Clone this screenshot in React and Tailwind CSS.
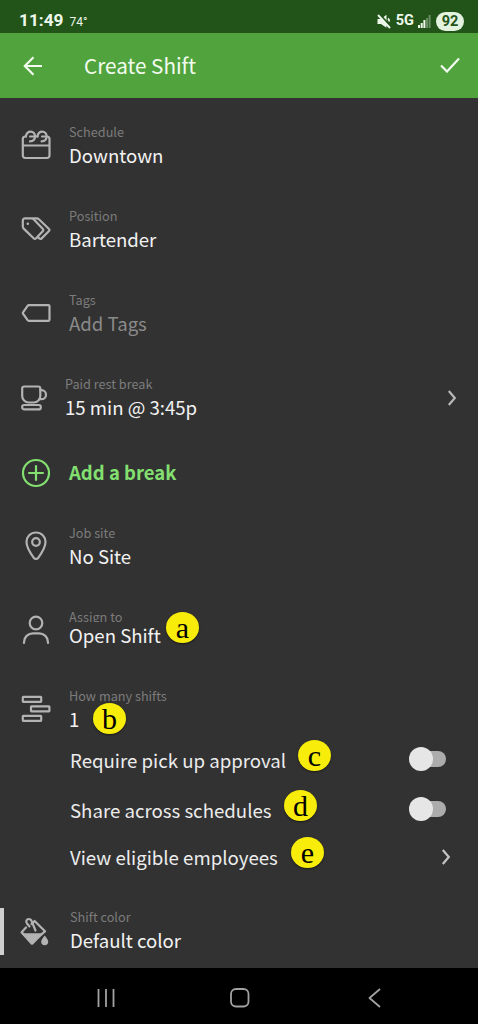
const stroke = {
  fill: 'none',
  stroke: 'currentColor',
  strokeWidth: 2.2,
  strokeLinecap: 'round',
  strokeLinejoin: 'round',
}

function ScheduleIcon() {
  return (
    <svg width="30" height="30" viewBox="0 0 30 30" {...stroke}>
      <path d="M5 6.5H3.800A2.500 2.500 0 0 0 1.800 9v16.400A2.500 2.500 0 0 0 4.200 28h21.800a2.500 2.500 0 0 0 2.500-2.600V9a2.500 2.500 0 0 0-2-2.500M1.800 15.500h26.700M9 6.500h7.500M21 6.500h4" />
      <path d="M4.800 6.500C5.400 3.200 7.300 1.600 9.600 1.600c2.700 0 4.400 2 4.400 4.600 0 3-2 5-5 5.200" />
      <path d="M16.400 6.500c.6-3.300 2.400-4.900 4.800-4.900 2.700 0 4.400 2 4.400 4.600 0 3-2 5-5 5.200" />
    </svg>
  )
}

function PositionIcon() {
  return (
    <svg width="30" height="24" viewBox="0 0 30 24" {...stroke}>
      <path d="M1.800 3.400a2 2 0 0 1 2-2h6.800a3 3 0 0 1 2.100.9l9.200 9.700a1.400 1.400 0 0 1 0 2l-7 7.600a1.400 1.400 0 0 1-2 0L2.700 11.600a3 3 0 0 1-.9-2.100z" />
      <path d="M12.500 1.400h3.300a3 3 0 0 1 2.100.9L28 12a1.400 1.400 0 0 1 0 2l-7.600 7.600a1.400 1.400 0 0 1-2 0l-1.400-1.400" />
      <circle cx="6.800" cy="6.800" r="1.300" fill="currentColor" stroke="none" />
    </svg>
  )
}

function TagsIcon() {
  return (
    <svg width="30" height="18" viewBox="0 0 30 18" {...stroke}>
      <path d="M7.800 1.200H27.500a1 1 0 0 1 1 1v13.600a1 1 0 0 1-1 1H7.800a1.500 1.500 0 0 1-1.200-.6L2 9.600a1 1 0 0 1 0-1.200l4.600-6.600a1.500 1.500 0 0 1 1.200-.6z" />
    </svg>
  )
}

function CupIcon() {
  return (
    <svg className="mt-0.5 -ml-1" width="28" height="26" viewBox="0 0 28 26" {...stroke}>
      <path d="M4 1.500h14.500a1.800 1.800 0 0 1 1.800 1.800V11a6.500 6.500 0 0 1-6.500 6.500H8.700A6.500 6.500 0 0 1 2.200 11V3.300A1.800 1.800 0 0 1 4 1.500z" />
      <path d="M20.300 5.200h1.200a4.500 4.500 0 0 1 0 9h-2" />
      <rect x="2.200" y="20" width="18.600" height="4.400" rx="2" />
    </svg>
  )
}

function PlusCircleIcon() {
  return (
    <svg width="30" height="30" viewBox="0 0 30 30" {...stroke}>
      <circle cx="15" cy="15" r="13" />
      <path d="M15 8v14M8 15h14" />
    </svg>
  )
}

function PinIcon() {
  return (
    <svg width="24" height="30" viewBox="0 0 24 30" {...stroke}>
      <path d="M12 1.500c5.500 0 9.500 4.200 9.500 9.500 0 4.600-4 11.300-7.300 15.800a2.700 2.700 0 0 1-4.400 0C6.500 22.300 2.500 15.600 2.500 11c0-5.300 4-9.500 9.500-9.500z" />
      <circle cx="12" cy="11" r="3.800" />
    </svg>
  )
}

function PersonIcon() {
  return (
    <svg width="28" height="30" viewBox="0 0 28 30" {...stroke}>
      <circle cx="14" cy="8" r="6.300" />
      <path d="M2 28v-.8c0-5.200 4-8.800 9-8.800h6c5 0 9 3.600 9 8.800v.8" />
    </svg>
  )
}

function ShiftsIcon() {
  return (
    <svg width="30" height="28" viewBox="0 0 30 28" {...stroke}>
      <rect x="1.800" y="1.800" width="18.400" height="5" rx=".5" />
      <rect x="10" y="11.300" width="18.400" height="5" rx=".5" />
      <rect x="1.800" y="20.800" width="18.400" height="5" rx=".5" />
    </svg>
  )
}

function PaintIcon() {
  return (
    <svg className="-ml-1" width="30" height="30" viewBox="0 0 30 30" {...stroke}>
      <path d="M7 10.500 2.600 15.200l10.200 10.200L26 14.300 15.600 4 12.500 7" />
      <path d="M2 16.300h22.800L14 27.400a1.500 1.500 0 0 1-2 0z" fill="currentColor" stroke="none" />
      <path d="M10.500 9.500 8 6.500C6.500 4.500 7.500 2 9.800 2c1.800 0 2.600 1.300 3 2.500l3.700 9" />
      <path d="M25.700 18.500c2 2.700 3.500 4.400 3.500 6.200a3.500 3.500 0 0 1-7 0c0-1.800 1.500-3.500 3.500-6.200z" fill="currentColor" stroke="none" />
    </svg>
  )
}

function Chevron() {
  return (
    <svg width="10" height="18" viewBox="0 0 10 18" {...stroke} strokeLinecap="butt" strokeLinejoin="miter">
      <path d="m1.800 2 6 7-6 7" />
    </svg>
  )
}

function StatusBar() {
  return (
    <div className="h-[33px] bg-[#22541a] flex items-center justify-between pl-[19px] pr-[14px] pt-[9px] text-[#eef8ea] font-[Roboto]">
      <div className="flex items-baseline gap-[6px]">
        <span className="text-[17.300px] leading-6 font-bold">11:49</span>
        <span className="text-[12px] leading-6">74°</span>
      </div>
      <div className="flex items-center">
        <svg width="14" height="15" viewBox="0 0 14 15">
          <path d="M.5 5h3.500L9.500.8v13L4 10H.5z" fill="currentColor" />
          <path d="M11 4.500c.9.800 1.300 1.700 1.300 3" fill="none" stroke="currentColor" strokeWidth="1.800" />
          <path d="m2.500 0 11 12.500" stroke="#22541a" strokeWidth="2" />
          <path d="m1 1 12 13" stroke="currentColor" strokeWidth="1.900" />
        </svg>
        <span className="ml-[5px] text-[14.500px] leading-6 font-bold">5G</span>
        <svg className="ml-1" width="13" height="13" viewBox="0 0 13 13" fill="currentColor">
          <rect x="0" y="10" width="2" height="3" />
          <rect x="2.700" y="8" width="2" height="5" />
          <rect x="5.400" y="5" width="2" height="8" />
          <rect x="8" y="3" width="2" height="10" opacity=".35" />
          <rect x="10.600" y="0" width="2" height="13" opacity=".35" />
        </svg>
        <span className="ml-[5px] w-7 h-[19px] rounded-full bg-[#e4f3df] text-[#22541a] text-[14.500px] leading-[20px] font-bold text-center">
          92
        </span>
      </div>
    </div>
  )
}

function Header() {
  return (
    <header className="h-[65px] bg-[#51a33d] flex items-center pl-[23px] pr-[18px] text-[#f2fbef]">
      <svg width="20" height="20" viewBox="0 0 20 20" {...stroke} strokeLinecap="butt" strokeLinejoin="miter">
        <path d="M19 10H2M10.500 1.300 1.800 10l8.700 8.700" />
      </svg>
      <h1 className="ml-[41px] -mt-0.5 text-[20.700px] leading-8">Create Shift</h1>
      <svg className="ml-auto -mt-0.5" width="20" height="16" viewBox="0 0 20 16" {...stroke} strokeLinecap="butt" strokeLinejoin="miter">
        <path d="m1 8.500 6 6L19 1.500" />
      </svg>
    </header>
  )
}

function Row({ icon: Icon, label, value, height = 'h-[84px]', text = 'ml-[18px] pt-0.5', labelBox = 'leading-[18px]', muted, chevron }) {
  return (
    <div className={`flex items-center pl-[21px] pr-[21px] ${height}`}>
      <div className="w-[30px] flex justify-center text-[#b3b3b3]">
        <Icon />
      </div>
      <div className={text}>
        <p className={`text-[12.700px] text-[#7c7c7c] ${labelBox}`}>{label}</p>
        <p className={`text-[18.600px] leading-7 ${muted ? 'text-[#8a8a8a]' : 'text-[#f2f2f2]'}`}>{value}</p>
      </div>
      {chevron && (
        <div className="ml-auto pt-0.5 text-[#b8b8b8]">
          <Chevron />
        </div>
      )}
    </div>
  )
}

function Toggle() {
  return (
    <div className="w-[37px] h-6 -mt-0.5 flex items-center relative">
      <div className="ml-auto w-[30px] h-4 rounded-full bg-[#acacac]" />
      <div className="absolute left-0 top-0 size-6 rounded-full bg-[#e6e6e6]" />
    </div>
  )
}

function Option({ label, height, children }) {
  return (
    <div className={`flex items-center justify-between pl-[70px] ${height}`}>
      <p className="text-[18.650px] leading-7 text-[#ececec]">{label}</p>
      {children}
    </div>
  )
}

function Badge({ letter, place }) {
  return (
    <div
      className={`absolute w-[33px] h-[31px] rounded-[50%] bg-[#f7ec0a] shadow-[0_1px_2px_rgba(0,0,0,0.5)] text-black text-[30px] leading-[31px] text-center font-['Liberation_Serif'] ${place}`}
    >
      {letter}
    </div>
  )
}

export default function App() {
  return (
    <div className="relative w-[478px] h-[1024px] overflow-hidden flex flex-col bg-[#323232] font-['Noto_Sans_CJK_JP',sans-serif]">
      <StatusBar />
      <Header />

      <main className="flex-1 pt-[5px]">
        <Row icon={ScheduleIcon} label="Schedule" value="Downtown" />
        <Row icon={PositionIcon} label="Position" value="Bartender" />
        <Row icon={TagsIcon} label="Tags" value="Add Tags" muted />
        <Row icon={CupIcon} label="Paid rest break" value="15 min @ 3:45p" text="ml-[14px] pt-0.5" chevron />
        <div className="h-[65px] flex items-center pl-[21px] pt-0.5 text-[#83e070]">
          <PlusCircleIcon />
          <p className="ml-[18px] -mt-px text-[18.500px] leading-7 font-bold">Add a break</p>
        </div>
        <Row icon={PinIcon} label="Job site" value="No Site" />
        <Row
          icon={PersonIcon}
          label="Assign to"
          value="Open Shift"
          height="h-[83px]"
          text="ml-[18px] -mt-[3px]"
          labelBox="h-[15px] -mb-px leading-[19px] overflow-hidden"
        />
        <Row icon={ShiftsIcon} label="How many shifts" value="1" height="h-[64px] pt-[11px]" />

        <Option label="Require pick up approval" height="h-[50px] pr-8">
          <Toggle />
        </Option>
        <Option label="Share across schedules" height="h-[50px] pr-8">
          <Toggle />
        </Option>
        <Option label="View eligible employees" height="h-[44px] pr-[27px]">
          <span className="text-[#c4c4c4]">
            <Chevron />
          </span>
        </Option>

        <div className="mt-[29px] h-[47px] flex items-center">
          <div className="w-1 h-[47px] bg-[#cfcfcf]" />
          <Row
            icon={PaintIcon}
            label="Shift color"
            value="Default color"
            height="-ml-1 h-[47px]"
            text="ml-[19px] -mt-px"
          />
        </div>
      </main>

      <nav className="h-14 bg-black text-[#a2a2a2] flex items-center pl-[97px] pt-[3px]">
        <svg width="18" height="18" viewBox="0 0 18 18" {...stroke} strokeWidth={1.8} strokeLinecap="butt">
          <path d="M1.500 0v18M9 0v18M16.500 0v18" />
        </svg>
        <svg className="ml-[115px]" width="20" height="20" viewBox="0 0 20 20" {...stroke} strokeWidth={1.8}>
          <rect x="1" y="1" width="17.500" height="17.500" rx="5" />
        </svg>
        <svg className="ml-[118px]" width="13" height="20" viewBox="0 0 13 20" {...stroke} strokeWidth={1.8} strokeLinecap="butt">
          <path d="M12 1 1.500 10 12 19" />
        </svg>
      </nav>

      <Badge letter="a" place="left-[166px] top-[612px]" />
      <Badge letter="b" place="left-[93px] top-[703px]" />
      <Badge letter="c" place="left-[298px] top-[740px]" />
      <Badge letter="d" place="left-[284px] top-[790px]" />
      <Badge letter="e" place="left-[291px] top-[837px]" />
    </div>
  )
}
